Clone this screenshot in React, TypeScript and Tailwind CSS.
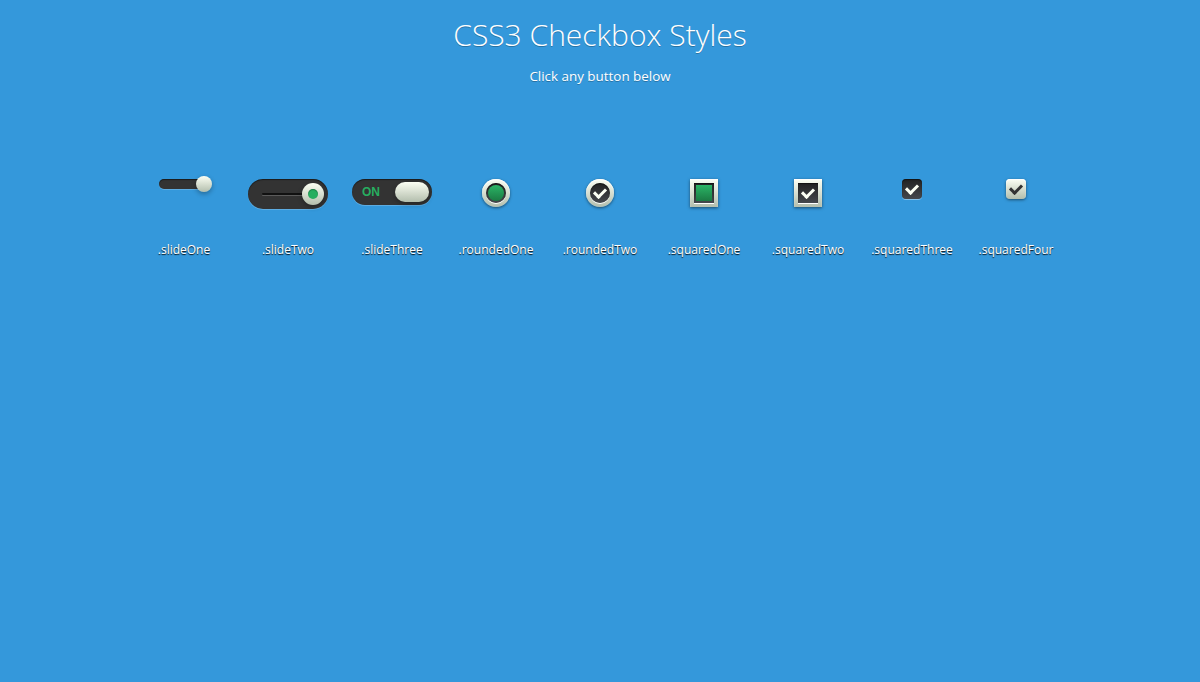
const font = { fontFamily: '"Open Sans", "Liberation Sans", sans-serif' };

const knob =
  "bg-linear-to-b from-[#fcfff4] via-[#dfe5d7] via-40% to-[#b3bead]";
const dark = "bg-linear-to-b from-[#222] to-[#45484d]";
const green = "bg-linear-to-b from-[#2bb566] to-[#1b7a43]";
const track =
  "rounded-full bg-[#333] shadow-[inset_0_1px_1px_rgba(0,0,0,0.5),0_1px_0_rgba(255,255,255,0.2)]";

// tick mark: two borders of a small box, turned -45deg
const Check = ({ color }: { color: string }) => (
  <span
    className={`-mt-[2px] box-content h-[5px] w-[9px] -rotate-45 border-b-[3px] border-l-[3px] ${color}`}
  />
);

const SlideOne = () => (
  <div className={`flex h-[10px] w-[50px] items-center justify-end ${track}`}>
    <span
      className={`-mr-[3px] h-4 w-4 shrink-0 rounded-full ${knob} shadow-[0_2px_5px_0_rgba(0,0,0,0.3)]`}
    />
  </div>
);

const SlideTwo = () => (
  <div className={`relative flex h-[30px] w-20 items-center justify-end pr-1 ${track}`}>
    <span className="absolute top-[14px] left-[14px] h-[2px] w-[52px] rounded-full bg-[#111] shadow-[0_1px_0_rgba(255,255,255,0.2)]" />
    <span
      className={`relative flex h-[22px] w-[22px] items-center justify-center rounded-full ${knob} shadow-[0_2px_5px_0_rgba(0,0,0,0.3)]`}
    >
      <span className="h-[10px] w-[10px] rounded-full bg-[#27ae60] shadow-[inset_0_1px_1px_rgba(0,0,0,0.3)]" />
    </span>
  </div>
);

const SlideThree = () => (
  <div className={`flex h-[26px] w-20 items-center justify-between pr-[3px] pl-[10px] ${track}`}>
    <span
      className="text-[12px] leading-[14px] font-bold text-[#27ae60]"
      style={{ fontFamily: '"Liberation Sans", Arial, sans-serif' }}
    >
      ON
    </span>
    <span
      className={`h-5 w-[34px] rounded-full ${knob} shadow-[0_2px_5px_0_rgba(0,0,0,0.3)]`}
    />
  </div>
);

const Frame = ({ round, children }: { round?: boolean; children: React.ReactNode }) => (
  <div
    className={`flex h-7 w-7 items-center justify-center ${round ? "rounded-full" : ""} ${knob} shadow-[inset_0_1px_1px_#fff,0_1px_3px_rgba(0,0,0,0.5)]`}
  >
    <div
      className={`flex h-5 w-5 items-center justify-center ${round ? "rounded-full" : ""} ${dark} shadow-[inset_0_1px_1px_rgba(0,0,0,0.5),0_1px_0_#fff]`}
    >
      {children}
    </div>
  </div>
);

const RoundedOne = () => (
  <Frame round>
    <span className={`h-4 w-4 rounded-full ${green}`} />
  </Frame>
);

const RoundedTwo = () => (
  <Frame round>
    <Check color="border-[#fcfff4]" />
  </Frame>
);

const SquaredOne = () => (
  <Frame>
    <span className={`h-4 w-4 ${green}`} />
  </Frame>
);

const SquaredTwo = () => (
  <Frame>
    <Check color="border-[#fcfff4]" />
  </Frame>
);

const SquaredThree = () => (
  <div
    className={`flex h-5 w-5 items-center justify-center rounded-[4px] ${dark} shadow-[inset_0_1px_1px_rgba(0,0,0,0.5),0_1px_0_rgba(255,255,255,0.4)]`}
  >
    <Check color="border-[#fcfff4]" />
  </div>
);

const SquaredFour = () => (
  <div
    className={`flex h-5 w-5 items-center justify-center rounded-[4px] ${knob} shadow-[inset_0_1px_1px_#fff,0_1px_3px_rgba(0,0,0,0.5)]`}
  >
    <Check color="border-[#333]" />
  </div>
);

const items: [string, () => React.ReactElement][] = [
  [".slideOne", SlideOne],
  [".slideTwo", SlideTwo],
  [".slideThree", SlideThree],
  [".roundedOne", RoundedOne],
  [".roundedTwo", RoundedTwo],
  [".squaredOne", SquaredOne],
  [".squaredTwo", SquaredTwo],
  [".squaredThree", SquaredThree],
  [".squaredFour", SquaredFour],
];

export default function App() {
  return (
    <div className="min-h-[682px] bg-[#3498db] pt-[15px] text-white" style={font}>
      <h1 className="text-center text-[30px] leading-[40px] font-light [text-shadow:0_1px_0_rgba(0,0,0,0.25)]">
        CSS3 Checkbox Styles
      </h1>
      <p className="mt-[11px] text-center text-[13.4px] leading-[20px] [text-shadow:0_1px_0_rgba(0,0,0,0.25)]">
        Click any button below
      </p>
      <div className="mt-[93px] flex justify-center">
        <div className="grid w-[936px] grid-cols-9">
          {items.map(([name, Widget]) => (
            <div key={name} className="flex flex-col items-center">
              <div className="flex h-[63px] items-start justify-center">
                <Widget />
              </div>
              <span className="text-[12px] leading-[16px] [text-shadow:0_1px_1px_rgba(0,0,0,0.9)]">
                {name}
              </span>
            </div>
          ))}
        </div>
      </div>
    </div>
  );
}
